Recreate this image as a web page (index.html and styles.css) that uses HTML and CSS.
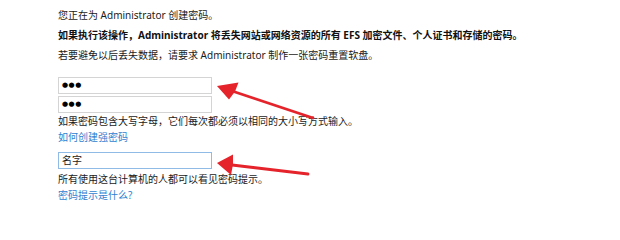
FILE: index.html
```html
<!DOCTYPE html>
<html lang="zh-CN">
<head>
<meta charset="utf-8">
<title>创建密码</title>
<link rel="stylesheet" href="styles.css">
</head>
<body>
<div class="page">
  <p class="line">您正在为 Administrator 创建密码。</p>
  <p class="line bold">如果执行该操作，Administrator 将丢失网站或网络资源的所有 EFS 加密文件、个人证书和存储的密码。</p>
  <p class="line">若要避免以后丢失数据，请要求 Administrator 制作一张密码重置软盘。</p>

  <div class="field first"><span class="dots">●●●</span></div>
  <div class="field second"><span class="dots">●●●</span></div>
  <p class="small">如果密码包含大写字母，它们每次都必须以相同的大小写方式输入。</p>
  <a class="small link" href="#">如何创建强密码</a>

  <div class="field focused">名字</div>
  <p class="small">所有使用这台计算机的人都可以看见密码提示。</p>
  <a class="small link" href="#">密码提示是什么?</a>
</div>

<svg class="arrows" width="620" height="215" viewBox="0 0 620 215">
  <g fill="#e5232b" stroke="#e5232b">
    <line x1="313" y1="118" x2="232" y2="91" stroke-width="2.8" stroke-linecap="round"/>
    <polygon stroke="none" points="217,86 238.5,82.5 235,91.5 229,99.5"/>
    <line x1="308" y1="174" x2="232" y2="165" stroke-width="2.8" stroke-linecap="round"/>
    <polygon stroke="none" points="217,163 233,154.5 233,164.5 231,175"/>
  </g>
</svg>
</body>
</html>
```

FILE: styles.css
```css
html, body {
  margin: 0;
  padding: 0;
  background: #ffffff;
}

body {
  position: relative;
  width: 620px;
  height: 215px;
  overflow: hidden;
  font-family: "Noto Sans", "Noto Sans CJK SC", sans-serif;
  font-size: 10px;
  color: #1a1a1a;
}

.page {
  display: flex;
  flex-direction: column;
  align-items: flex-start;
  padding: 5px 0 0 58px;
}

.line {
  margin: 0;
  line-height: 20px;
  white-space: nowrap;
}

.bold {
  font-weight: bold;
  color: #111111;
}

.field {
  box-sizing: border-box;
  width: 154px;
  height: 17px;
  border: 1px solid #d4d4d4;
  background: #ffffff;
  padding: 0 0 0 3px;
  display: flex;
  align-items: center;
  line-height: 15px;
}

.field.first {
  margin-top: 12px;
}

.field.second {
  margin-top: 2px;
}

.field.focused {
  margin-top: 7px;
  border-color: #8fbbe6;
}

.dots {
  font-family: "DejaVu Sans", sans-serif;
  font-size: 7px;
  letter-spacing: 0.5px;
  color: #000000;
}

.small {
  margin: 0;
  line-height: 16px;
  white-space: nowrap;
}

.focused + .small {
  margin-top: 2px;
}

.link {
  color: #2f7fd0;
  text-decoration: none;
}

.arrows {
  position: absolute;
  left: 0;
  top: 0;
  pointer-events: none;
}
```
